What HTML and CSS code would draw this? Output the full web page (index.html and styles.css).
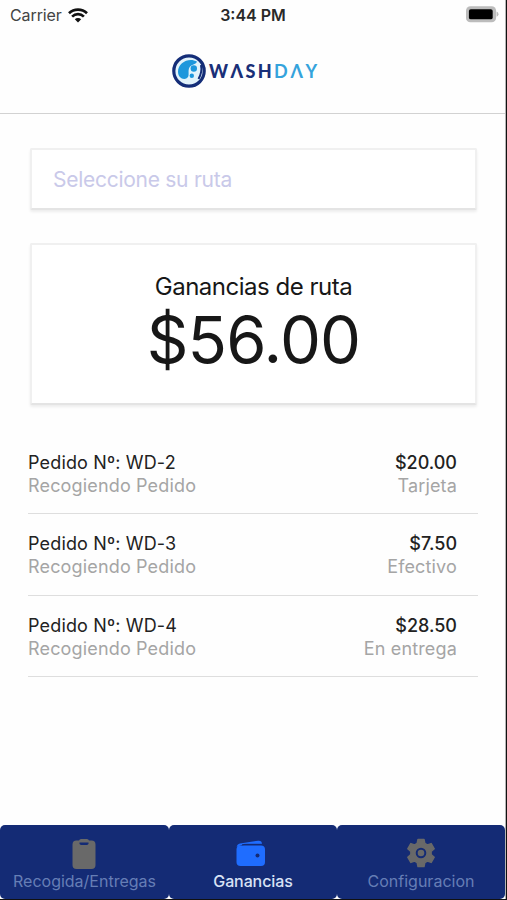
FILE: index.html
```html
<!DOCTYPE html>
<html lang="es">
<head>
<meta charset="utf-8">
<title>Washday</title>
<link rel="stylesheet" href="styles.css">
</head>
<body>
<div class="screen">
  <header class="status">
    <div class="carrier"><span class="carrier-name">Carrier</span>
      <svg class="wifi" viewBox="0 0 20 15"><path d="M1 5.2a13 13 0 0 1 18 0M4.1 8.6a8.5 8.5 0 0 1 11.8 0" fill="none" stroke="#111" stroke-width="2.7"/><path d="M6.8 11.2a4.6 4.6 0 0 1 6.4 0L10 14.6z" fill="#111"/></svg>
    </div>
    <div class="time"><span>3:44 PM</span></div>
    <div class="power"><svg class="battery" viewBox="0 0 34 17"><rect x="0" y="0" width="31" height="16.5" rx="4.5" fill="#bcbcbc"/><path d="M31.5 5.5q2 .8 2 2.7t-2 2.7z" fill="#bcbcbc"/><rect x="3" y="3" width="24.500" height="10.500" rx="2" fill="#000"/></svg></div>
  </header>
  <div class="brand">
    <svg class="mark" viewBox="0 0 34 34"><circle cx="17" cy="17" r="15.200" fill="#e2f3fb" stroke="#142d78" stroke-width="3.200"/><path d="M25 7.500C17 3 6 8.500 6 17.500c0 6 5 8.800 8.700 6.800 3.800-2.300.3-7.300 3-11.300 1.800-2.700 5.800-2 7.300-5.500z" fill="#1d97dc"/><circle cx="21.800" cy="14.500" r="3.200" fill="#1d97dc"/><circle cx="19.800" cy="21.800" r="2.200" fill="#1d97dc"/><path d="M29 11q1.500 7-2.500 14" fill="none" stroke="#142d78" stroke-width="2"/></svg>
    <div class="word"><span class="wash">WΛSH</span><span class="day">DΛY</span></div>
  </div>
  <main class="content">
    <div class="select"><span>Seleccione su ruta</span></div>
    <section class="total"><div class="total-label"><span>Ganancias de ruta</span></div><div class="total-value"><span>$56.00</span></div></section>
    <div class="orders">
      <article class="order"><div><div class="id"><span>Pedido Nº: WD-2</span></div><div class="sub"><span>Recogiendo Pedido</span></div></div><div class="right"><div class="price"><span>$20.00</span></div><div class="sub"><span>Tarjeta</span></div></div></article>
      <article class="order"><div><div class="id"><span>Pedido Nº: WD-3</span></div><div class="sub"><span>Recogiendo Pedido</span></div></div><div class="right"><div class="price"><span>$7.50</span></div><div class="sub"><span>Efectivo</span></div></div></article>
      <article class="order"><div><div class="id"><span>Pedido Nº: WD-4</span></div><div class="sub"><span>Recogiendo Pedido</span></div></div><div class="right"><div class="price"><span>$28.50</span></div><div class="sub"><span>En entrega</span></div></div></article>
    </div>
  </main>
  <nav class="tabs">
    <div class="tab"><svg class="icon clip" viewBox="0 0 30 32"><path d="M7.500 2.500H10Q10.500 1 12 1h6q1.500 0 2 1.500h2.500q4 0 4 4V27q0 4-4 4h-15q-4 0-4-4V6.500q0-4 4-4z" fill="#696969"/><path d="M10.500 4.600h9v.7q0 1.700-1.700 1.700h-5.600q-1.700 0-1.700-1.700z" fill="#142b75"/></svg><span>Recogida/Entregas</span></div>
    <div class="tab active"><svg class="icon wallet" viewBox="0 0 30 32"><path d="M.7 9Q1 6 4 5.500L22 2.700q4-.4 4 3.300H8z" fill="#1f6dff"/><rect x=".5" y="7.500" width="28.500" height="20.500" rx="4" fill="#1f6dff"/><path d="M6 6.900q2-.6 5-.6h16" fill="none" stroke="#142b75" stroke-width=".9"/><circle cx="21.500" cy="17.500" r="2" fill="#142b75"/></svg><span>Ganancias</span></div>
    <div class="tab"><svg class="icon" viewBox="0 0 30 32"><path d="M12 1.500h6l.8 4 2.500 1.500 3.900-1.400 3 5.200-3.100 2.700v3l3.100 2.700-3 5.200-3.900-1.400-2.500 1.500-.8 4h-6l-.8-4L8.700 23l-3.900 1.400-3-5.200 3.100-2.700v-3l-3.100-2.700 3-5.200L8.700 7l2.500-1.500z" fill="#696969" stroke="#696969" stroke-width="1.500" stroke-linejoin="round"/><circle cx="15" cy="15" r="4.300" fill="#696969" stroke="#142b75" stroke-width="2"/></svg><span>Configuracion</span></div>
  </nav>
</div>
</body>
</html>
```
FILE: styles.css
```css
* { box-sizing: border-box; }
body { margin: 0; background: #111; font-family: Inter, "Liberation Sans", sans-serif; color: #171717; }
.screen { width: 506px; height: 899px; background: #fefefe; border-right: 1px solid #b5b5b5; display: flex; flex-direction: column; overflow: hidden; white-space: nowrap; }
.status { height: 30px; display: grid; grid-template-columns: 1fr auto 1fr; align-items: center; padding: 0 6px 0 10px; font-size: 16px; line-height: 20px; }
.carrier { display: flex; align-items: center; gap: 6px; color: #444; letter-spacing: -.1px; }
.wifi { width: 20px; height: 15px; }
.time { font-weight: 600; color: #292929; margin-left: -3px; }
.power { display: flex; justify-content: flex-end; }
.battery { width: 33px; height: 17px; margin-top: -2px; }
.brand { height: 84px; border-bottom: 1px solid #d2d2d2; display: flex; align-items: center; padding: 0 0 2px 172px; gap: 3px; }
.mark { width: 34px; height: 34px; }
.word { font-family: Lato, sans-serif; font-size: 18px; line-height: 20px; }
.wash { font-weight: 900; color: #192f78; letter-spacing: 2.400px; }
.day { color: #35a3dc; letter-spacing: 2.600px; font-weight: 700; }
.content { flex: 1; padding: 34px 27px 0 28px; }
.select, .total { margin: 0 1px 0 2px; border: 2px solid #f0f0f0; border-bottom-color: #e4e4e4; border-radius: 2px; box-shadow: 0 2px 3px rgba(0,0,0,.07); background: #fff; }
.select { height: 62px; padding-left: 21px; font-size: 21px; letter-spacing: -.27px; line-height: 59px; color: #c9c9e9; }
.total { height: 162px; margin-top: 33px; text-align: center; padding-top: 27px; }
.total-label { font-size: 24px; line-height: 30px; letter-spacing: -.48px; }
.total-value { font-size: 65px; line-height: 76px; letter-spacing: -.8px; }
.orders { margin-top: 27px; }
.order { height: 81.500px; border-bottom: 1px solid #dedede; display: flex; justify-content: space-between; padding: 19px 21px 0 0; font-size: 18px; line-height: 23px; color: #222; }
.order:first-child { height: 82px; }
.order + .order { padding-top: 18px; }
.id { letter-spacing: .16px; }
.right { text-align: right; }
.price { font-weight: 500; }
.sub { color: #a5a5a5; letter-spacing: .16px; }
.tabs { height: 74px; display: grid; grid-template-columns: 169px 168px 168px; }
.tab { background: #142b75; border-radius: 5px; display: flex; flex-direction: column; align-items: center; color: #667eb5; padding-top: 13px; font-size: 16px; line-height: 22px; }
.active { color: #d9e2f5; font-weight: 450; }
.active span { letter-spacing: -.1px; }
.icon { width: 30px; height: 32px; }
.clip { margin-left: -2px; }
.wallet { margin-left: -4px; }
```
